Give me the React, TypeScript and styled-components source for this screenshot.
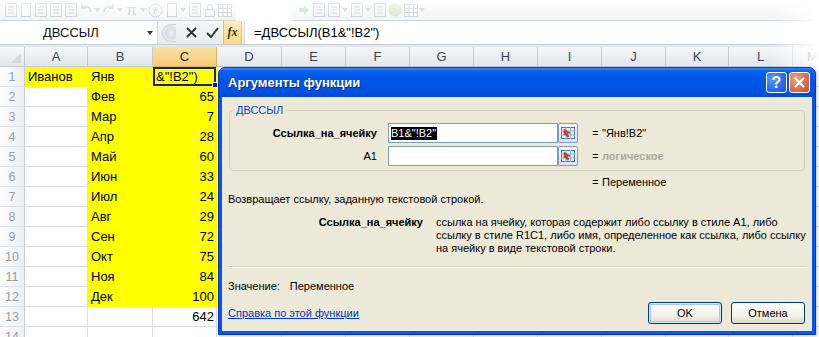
import React from "react";
import styled, { createGlobalStyle } from "styled-components";

const Global = createGlobalStyle`
  html, body { margin: 0; padding: 0; background: #fff; }
  body { width: 819px; height: 337px; overflow: hidden; font-family: "Liberation Sans", Arial, sans-serif; }
  * { box-sizing: border-box; }
`;

const Screen = styled.div`
  position: relative;
  width: 819px;
  height: 337px;
  overflow: hidden;
  background: #fff;
  display: flex;
  flex-direction: column;
`;

/* ---------- Quick access toolbar ---------- */
const Qat = styled.div`
  height: 21px;
  flex: none;
  display: flex;
  align-items: center;
  padding-left: 3px;
  background: linear-gradient(#ffffff, #f1f3f5);
  border-bottom: 1px solid #d3d7dc;
`;

const QatGroup = styled.div<{ $gap?: number }>`
  display: flex;
  align-items: center;
  height: 100%;
  margin-right: ${(p) => p.$gap ?? 0}px;
  opacity: 0.38;
`;

const QatSlot = styled.span<{ $w: number }>`
  width: ${(p) => p.$w}px;
  height: 16px;
  display: flex;
  align-items: center;
  justify-content: center;
  color: #7c858f;
  font-size: 14px;
`;

const QatIcon = ({ kind }: { kind: string }) => {
  const s = "#8b939c";
  switch (kind) {
    case "drop":
      return (
        <QatSlot $w={8}>
          <svg width="6" height="4"><path d="M0 0h6L3 4z" fill={s} /></svg>
        </QatSlot>
      );
    case "doc":
      return (
        <QatSlot $w={15}>
          <svg width="12" height="14"><rect x="1.5" y="0.5" width="9" height="13" fill="#fff" stroke={s} /></svg>
        </QatSlot>
      );
    case "sheet":
      return (
        <QatSlot $w={15}>
          <svg width="14" height="14">
            <rect x="1.5" y="0.5" width="11" height="13" fill="#f4f4f4" stroke={s} />
            <path d="M4 4h6M4 7h6M4 10h6" stroke={s} />
          </svg>
        </QatSlot>
      );
    case "undo":
      return (
        <QatSlot $w={15}>
          <svg width="14" height="14"><path d="M3 5c4-3 9-1 9 4M3 1v4h4" fill="none" stroke={s} strokeWidth="1.6" /></svg>
        </QatSlot>
      );
    case "redo":
      return (
        <QatSlot $w={15}>
          <svg width="14" height="14"><path d="M11 5C7 2 2 4 2 9M11 1v4H7" fill="none" stroke={s} strokeWidth="1.6" /></svg>
        </QatSlot>
      );
    case "pi":
      return <QatSlot $w={15}>π</QatSlot>;
    case "fx":
      return (
        <QatSlot $w={17}>
          <svg width="15" height="15"><circle cx="7.5" cy="7.5" r="6.5" fill="#f3f3f3" stroke={s} /><path d="M6 11l2-7M5 7h4" stroke={s} /></svg>
        </QatSlot>
      );
    case "lock":
      return (
        <QatSlot $w={15}>
          <svg width="12" height="14"><rect x="1.5" y="6.5" width="9" height="7" fill="#eee" stroke={s} /><path d="M3.5 6.5V4a2.5 2.5 0 0 1 5 0v2.5" fill="none" stroke={s} /></svg>
        </QatSlot>
      );
    case "table":
      return (
        <QatSlot $w={15}>
          <svg width="14" height="13"><rect x="0.5" y="0.5" width="13" height="12" fill="#fff" stroke={s} /><path d="M0 4.5h14M0 8.5h14M5 0v13M9.5 0v13" stroke={s} /></svg>
        </QatSlot>
      );
    case "arrow":
      return (
        <QatSlot $w={15}>
          <svg width="12" height="12"><path d="M1 4h5V1l5 5-5 5V8H1z" fill="#8fbf6a" /></svg>
        </QatSlot>
      );
    case "circle":
      return (
        <QatSlot $w={16}>
          <svg width="14" height="14"><circle cx="7" cy="7" r="6" fill="#a9d88a" stroke="#8cb978" /></svg>
        </QatSlot>
      );
    default:
      return (
        <QatSlot $w={15}>
          <svg width="14" height="14"><rect x="0.5" y="0.5" width="13" height="13" fill="#eee" stroke={s} /></svg>
        </QatSlot>
      );
  }
};

const QatGap = styled.div`
  width: 56px;
  height: 21px;
  background: #fff;
  margin-right: 4px;
`;

/* ---------- Formula bar ---------- */
const FormulaBar = styled.div`
  height: 24px;
  flex: none;
  display: flex;
  align-items: stretch;
  background: linear-gradient(#f6f7f9, #e8ebee);
  border-bottom: 1px solid #c9ced4;
`;

const NameBox = styled.div`
  width: 158px;
  display: flex;
  align-items: center;
  background: #fff;
  border-right: 1px solid #d6dade;
  padding-left: 43px;
  font-size: 13px;
  color: #111;
`;

const NameArrow = styled.span`
  margin-left: auto;
  margin-right: 4px;
  width: 0;
  height: 0;
  border-left: 3.5px solid transparent;
  border-right: 3.5px solid transparent;
  border-top: 4px solid #333;
`;

const Bubble = styled.div`
  width: 22px;
  display: flex;
  align-items: center;
  justify-content: center;
`;

const BubbleDot = styled.span`
  width: 14px;
  height: 18px;
  border-radius: 9px 0 0 9px;
  background: radial-gradient(circle at 8px 8px, #f0f0f0 0, #d9dde2 5px, #eceef1 8px);
  border: 1px solid #cdd2d8;
  border-right: none;
`;

const EditBtns = styled.div`
  width: 43px;
  display: flex;
  align-items: center;
  justify-content: space-around;
  padding-left: 1px;
`;

const FxBtn = styled.div`
  width: 19px;
  margin: 0 2px 0 0;
  background: linear-gradient(#fdeebf, #f9d97c);
  border-left: 1px solid #e3c36a;
  border-right: 1px solid #e3c36a;
  display: flex;
  align-items: center;
  justify-content: center;
  font-family: "Liberation Serif", serif;
  font-style: italic;
  font-weight: bold;
  font-size: 12px;
  color: #333;
`;

const FormulaInput = styled.div`
  flex: 1;
  background: #fff;
  border-left: 1px solid #d6dade;
  display: flex;
  align-items: center;
  padding-left: 9px;
  font-size: 13px;
  color: #000;
`;

const BarGap = styled.div`
  height: 2px;
  flex: none;
  background: #e3e6ea;
`;

/* ---------- Sheet ---------- */
const COLS = [63, 65, 64, 65, 64, 64, 64, 64, 64, 64, 63, 64, 40];
const LETTERS = ["A", "B", "C", "D", "E", "F", "G", "H", "I", "J", "K", "L", "M"];

const Sheet = styled.div`
  display: grid;
  grid-template-columns: 25px ${COLS.map((c) => c + "px").join(" ")};
  grid-auto-rows: 20px;
  font-size: 13px;
`;

const Corner = styled.div`
  background: linear-gradient(#f7f8fa, #e3e6ea);
  border-right: 1px solid #c6cbd1;
  border-bottom: 1px solid #c6cbd1;
  position: relative;
  &::after {
    content: "";
    position: absolute;
    right: 3px;
    bottom: 3px;
    border-left: 10px solid transparent;
    border-bottom: 10px solid #d5d9de;
  }
`;

const ColHead = styled.div<{ $active?: boolean }>`
  display: flex;
  align-items: center;
  justify-content: center;
  color: ${(p) => (p.$active ? "#2a2a2a" : "#3d4652")};
  background: ${(p) =>
    p.$active ? "linear-gradient(#fbe1a4, #f3cb79)" : "linear-gradient(#f5f6f8, #e2e6ea)"};
  border-right: 1px solid ${(p) => (p.$active ? "#e0b65e" : "#c6cbd1")};
  border-bottom: 1px solid ${(p) => (p.$active ? "#e0b65e" : "#c6cbd1")};
`;

const RowHead = styled.div`
  display: flex;
  align-items: center;
  justify-content: center;
  color: #9aa0a8;
  font-size: 12.5px;
  background: linear-gradient(to right, #fdfdfd, #eceef1);
  border-right: 1px solid #c6cbd1;
  border-bottom: 1px solid #dfe2e6;
`;

const Cell = styled.div<{ $fill?: boolean; $right?: boolean; $edit?: boolean }>`
  position: relative;
  display: flex;
  align-items: center;
  justify-content: ${(p) => (p.$right ? "flex-end" : "flex-start")};
  padding: 0 ${(p) => (p.$right ? 2 : 3)}px 0 3px;
  background: ${(p) => (p.$fill ? "#ffff00" : "#fff")};
  border-right: 1px solid ${(p) => (p.$fill ? "#ffff00" : "#dadde1")};
  border-bottom: 1px solid ${(p) => (p.$fill ? "#ffff00" : "#dadde1")};
  color: #000;
  white-space: nowrap;
  ${(p) =>
    p.$edit &&
    `
    box-shadow: inset 0 0 0 2px #1c2566;
    &::after {
      content: "";
      position: absolute;
      right: -3px;
      bottom: -3px;
      width: 5px;
      height: 5px;
      background: #1c2566;
      border: 1px solid #fff;
    }
  `}
`;

type Row = [string, string, string];
const ROWS: Row[] = [
  ["Иванов", "Янв", "&\"!B2\")"],
  ["", "Фев", "65"],
  ["", "Мар", "7"],
  ["", "Апр", "28"],
  ["", "Май", "60"],
  ["", "Июн", "33"],
  ["", "Июл", "24"],
  ["", "Авг", "29"],
  ["", "Сен", "72"],
  ["", "Окт", "75"],
  ["", "Ноя", "84"],
  ["", "Дек", "100"],
  ["", "", "642"],
  ["", "", ""],
];

/* ---------- Dialog ---------- */
const Window = styled.div`
  position: absolute;
  left: 218px;
  top: 67px;
  width: 598px;
  height: 268px;
  background: #0757e6;
  border: 1px solid #0a34c8;
  border-radius: 7px 7px 0 0;
  padding: 0 3px 3px;
  display: flex;
  flex-direction: column;
  font-family: "Liberation Sans", Tahoma, sans-serif;
  font-size: 11px;
  color: #000;
  box-shadow: 1px 1px 3px rgba(60, 80, 140, 0.35);
`;

const TitleBar = styled.div`
  height: 29px;
  flex: none;
  margin: 0 -3px;
  padding: 0 5px 0 9px;
  display: flex;
  align-items: center;
  border-radius: 6px 6px 0 0;
  background: linear-gradient(#3b8cf5 0, #0a62ee 10%, #0056e6 40%, #0053e0 80%, #0049d0 100%);
`;

const Title = styled.span`
  color: #fff;
  font-weight: bold;
  font-size: 13px;
  text-shadow: 1px 1px 0 #0b2a8c;
  flex: 1;
`;

const CaptionBtn = styled.div<{ $close?: boolean }>`
  width: 21px;
  height: 21px;
  margin-left: 2px;
  border: 1px solid #fff;
  border-radius: 3px;
  display: flex;
  align-items: center;
  justify-content: center;
  color: #fff;
  font-weight: bold;
  font-size: 16px;
  background: ${(p) =>
    p.$close
      ? "radial-gradient(circle at 30% 30%, #f0a486 0, #dd6e48 55%, #c8522c 100%)"
      : "radial-gradient(circle at 30% 30%, #5d9cf8 0, #2a6ef0 55%, #1b55d6 100%)"};
`;

const Body = styled.div`
  flex: 1;
  background: #ece9d8;
  display: flex;
  flex-direction: column;
  padding: 0 7px 7px 6px;
`;

const Group = styled.div`
  position: relative;
  margin: 13px 0 0 1px;
  height: 61px;
  border: 1px solid #d0d0bf;
  border-radius: 4px;
  padding-top: 12px;
  display: flex;
  flex-direction: column;
  gap: 3px;
`;

const Legend = styled.span`
  position: absolute;
  top: -8px;
  left: 4px;
  padding: 0 2px;
  background: #ece9d8;
  color: #0046d5;
  line-height: 14px;
`;

const ArgRow = styled.div`
  display: flex;
  align-items: center;
  height: 20px;
`;

const ArgLabel = styled.span<{ $bold?: boolean }>`
  width: 147px;
  text-align: right;
  font-weight: ${(p) => (p.$bold ? "bold" : "normal")};
  margin-right: 11px;
`;

const ArgInput = styled.div`
  width: 170px;
  height: 20px;
  border: 1px solid #7f9db9;
  background: #fff;
  display: flex;
  align-items: center;
  padding-left: 2px;
`;

const Selected = styled.span`
  background: #000;
  color: #fff;
  line-height: 13px;
  padding-right: 1px;
`;

const RefBtn = styled.div`
  width: 20px;
  height: 20px;
  border: 1px solid #7f9db9;
  border-radius: 2px;
  background: linear-gradient(#f4f7fc, #d7e2f3);
  display: flex;
  align-items: center;
  justify-content: center;
`;

const RefIcon = () => (
  <svg width="14" height="12" viewBox="0 0 14 12">
    <rect x="0.5" y="0.5" width="13" height="11" fill="#e9f0fb" stroke="#4b78b8" />
    <path d="M0 4h14M0 8h14M5 0v12M9.5 0v12" stroke="#8fb0dd" />
    <path d="M3 2l6 4-3 0.5 2 3-1.5 0.8-2-3L3 8z" fill="#d24a1c" stroke="#8c2a08" strokeWidth="0.5" />
  </svg>
);

const Eq = styled.span<{ $ml?: number }>`
  margin-left: ${(p) => p.$ml ?? 14}px;
  width: 10px;
`;

const ArgValue = styled.span<{ $muted?: boolean }>`
  color: ${(p) => (p.$muted ? "#aca899" : "#000")};
  font-weight: ${(p) => (p.$muted ? "bold" : "normal")};
`;

const ResultRow = styled.div`
  margin-top: 5px;
  height: 13px;
  line-height: 13px;
  padding-left: 364px;
  display: flex;
`;

const TextLine = styled.div<{ $mt: number }>`
  margin-top: ${(p) => p.$mt}px;
  height: 13px;
  line-height: 13px;
  white-space: nowrap;
`;

const ArgHelp = styled.div`
  margin-top: 10px;
  display: grid;
  grid-template-columns: 195px 1fr;
  column-gap: 13px;
  line-height: 13px;
`;

const HelpName = styled.span`
  text-align: right;
  font-weight: bold;
`;

const HelpText = styled.div`
  white-space: nowrap;
`;

const Separator = styled.div`
  margin: 11px -2px 0 0;
  height: 2px;
  border-top: 1px solid #d0d0bf;
  border-bottom: 1px solid #fff;
`;

const ValueLine = styled.div`
  margin-top: 12px;
  height: 13px;
  line-height: 13px;
  display: flex;
  gap: 10px;
`;

const Footer = styled.div`
  margin-top: auto;
  display: flex;
  align-items: center;
  gap: 9px;
`;

const HelpLink = styled.a`
  color: #0033cc;
  text-decoration: underline;
  margin-right: auto;
`;

const Button = styled.button<{ $default?: boolean }>`
  width: 74px;
  height: 22px;
  border: 1px solid #003c74;
  border-radius: 3px;
  font: 11px "Liberation Sans", Tahoma, sans-serif;
  color: #000;
  background: linear-gradient(#ffffff, #f4f3ee 60%, #dcd8cc);
  box-shadow: ${(p) =>
    p.$default ? "inset 0 0 0 1px #cee7ff, inset 0 0 0 2px #a9c6f5" : "none"};
  padding: 0;
`;

const RightFade = styled.div`
  position: absolute;
  top: 0;
  right: 0;
  width: 48px;
  height: 67px;
  background: linear-gradient(to right, rgba(255, 255, 255, 0), #fff);
  pointer-events: none;
`;

const TopFade = styled.div`
  position: absolute;
  top: 0;
  left: 0;
  right: 0;
  height: 20px;
  background: linear-gradient(rgba(255, 255, 255, 0.55), rgba(255, 255, 255, 0));
  pointer-events: none;
`;

const HELP_LINES = [
  "ссылка на ячейку, которая содержит либо ссылку в стиле A1, либо",
  "ссылку в стиле R1C1, либо имя, определенное как ссылка, либо ссылку",
  "на ячейку в виде текстовой строки.",
];

export default function App() {
  const left = ["sheet", "doc", "sheet", "sheet", "sheet", "undo", "drop", "redo", "drop", "pi", "drop", "fx", "doc", "drop", "sheet", "lock", "table"];
  const right = ["arrow", "sheet", "sheet", "drop", "sheet", "drop", "sheet", "circle", "table", "drop"];
  return (
    <Screen>
      <Global />
      <Qat>
        <QatGroup $gap={4}>
          {left.map((k, i) => (
            <QatIcon key={i} kind={k} />
          ))}
        </QatGroup>
        <QatGap />
        <QatGroup>
          {right.map((k, i) => (
            <QatIcon key={i} kind={k} />
          ))}
        </QatGroup>
      </Qat>
      <FormulaBar>
        <NameBox>
          ДВССЫЛ
          <NameArrow />
        </NameBox>
        <Bubble>
          <BubbleDot />
        </Bubble>
        <EditBtns>
          <svg width="11" height="11"><path d="M1 1l9 9M10 1l-9 9" stroke="#333" strokeWidth="2" /></svg>
          <svg width="13" height="11"><path d="M1 6l4 4 7-9" fill="none" stroke="#333" strokeWidth="2" /></svg>
        </EditBtns>
        <FxBtn>fx</FxBtn>
        <FormulaInput>=ДВССЫЛ(B1&amp;"!B2")</FormulaInput>
      </FormulaBar>
      <BarGap />
      <Sheet>
        <Corner />
        {LETTERS.map((l) => (
          <ColHead key={l} $active={l === "C"}>
            {l}
          </ColHead>
        ))}
        {ROWS.map((r, i) => (
          <React.Fragment key={i}>
            <RowHead>{i + 1}</RowHead>
            <Cell $fill={i === 0}>{r[0]}</Cell>
            <Cell $fill={i < 12}>{r[1]}</Cell>
            <Cell $fill={i < 12} $right={i > 0} $edit={i === 0}>
              {r[2]}
            </Cell>
            {COLS.slice(3).map((_, j) => (
              <Cell key={j} />
            ))}
          </React.Fragment>
        ))}
      </Sheet>
      <TopFade />
      <RightFade />

      <Window>
        <TitleBar>
          <Title>Аргументы функции</Title>
          <CaptionBtn>?</CaptionBtn>
          <CaptionBtn $close>
            <svg width="11" height="11"><path d="M1 1l9 9M10 1l-9 9" stroke="#fff" strokeWidth="2.2" /></svg>
          </CaptionBtn>
        </TitleBar>
        <Body>
          <Group>
            <Legend>ДВССЫЛ</Legend>
            <ArgRow>
              <ArgLabel $bold>Ссылка_на_ячейку</ArgLabel>
              <ArgInput>
                <Selected>B1&amp;"!B2"</Selected>
              </ArgInput>
              <RefBtn>
                <RefIcon />
              </RefBtn>
              <Eq>=</Eq>
              <ArgValue>"Янв!B2"</ArgValue>
            </ArgRow>
            <ArgRow>
              <ArgLabel>A1</ArgLabel>
              <ArgInput />
              <RefBtn>
                <RefIcon />
              </RefBtn>
              <Eq>=</Eq>
              <ArgValue $muted>логическое</ArgValue>
            </ArgRow>
          </Group>
          <ResultRow>
            <Eq $ml={0}>=</Eq>
            <ArgValue>Переменное</ArgValue>
          </ResultRow>
          <TextLine $mt={4}>Возвращает ссылку, заданную текстовой строкой.</TextLine>
          <ArgHelp>
            <HelpName>Ссылка_на_ячейку</HelpName>
            <HelpText>
              {HELP_LINES.map((l) => (
                <div key={l}>{l}</div>
              ))}
            </HelpText>
          </ArgHelp>
          <Separator />
          <ValueLine>
            <span>Значение:</span>
            <span>Переменное</span>
          </ValueLine>
          <Footer>
            <HelpLink href="#">Справка по этой функции</HelpLink>
            <Button $default>OK</Button>
            <Button>Отмена</Button>
          </Footer>
        </Body>
      </Window>
    </Screen>
  );
}
